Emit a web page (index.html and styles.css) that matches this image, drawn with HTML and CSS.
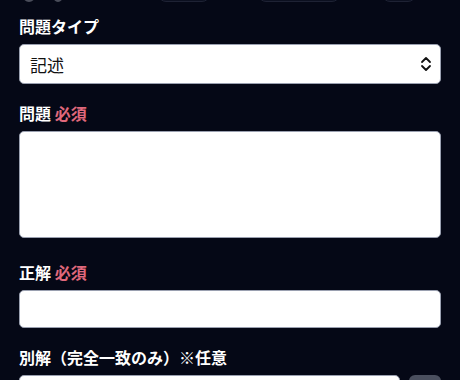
FILE: index.html
```html
<!DOCTYPE html>
<html lang="ja">

<head>
    <meta charset="UTF-8">
    <meta name="viewport" content="width=device-width, initial-scale=1.0">
    <title>問題を作成</title>
    <link rel="stylesheet" href="styles.css">
</head>

<body>
    <div class="toolbar">
        <span class="tool-icon"></span>
        <span class="tool-icon small"></span>
        <span class="tool-btn b1"></span>
        <span class="tool-btn b2"></span>
        <span class="tool-btn b3"></span>
    </div>

    <form class="quiz-form">
        <div class="field">
            <label for="type">問題タイプ</label>
            <div class="select-wrap">
                <select id="type" name="type">
                    <option>記述</option>
                    <option>選択</option>
                </select>
                <svg class="chevron" width="12" height="16" viewBox="0 0 12 16">
                    <path d="M2 6 L6 2 L10 6 M2 10 L6 14 L10 10" fill="none" stroke="#111" stroke-width="1.8"
                        stroke-linecap="round" stroke-linejoin="round" />
                </svg>
            </div>
        </div>

        <div class="field">
            <label for="question">問題 <span class="required">必須</span></label>
            <textarea id="question" name="question"></textarea>
        </div>

        <div class="field">
            <label for="answer">正解 <span class="required">必須</span></label>
            <input type="text" id="answer" name="answer">
        </div>

        <div class="field">
            <label for="alt">別解（完全一致のみ）※任意</label>
            <div class="alt-row">
                <input type="text" id="alt" name="alt">
                <button type="button" class="add-btn"></button>
            </div>
        </div>
    </form>
</body>

</html>
```

FILE: styles.css
```css
* {
    padding: 0;
    margin: 0;
    box-sizing: border-box;
}

body {
    background-color: #050816;
    color: #fff;
    font-family: "Noto Sans CJK JP", "Noto Sans", sans-serif;
    width: 460px;
    height: 380px;
    overflow: hidden;
}

.toolbar {
    display: flex;
    align-items: flex-end;
    height: 20px;
    margin-top: -18px;
    padding: 0 19px;
}

.tool-icon {
    width: 12px;
    height: 12px;
    border-radius: 50%;
    border: 2px solid #4a4d5a;
    margin-left: 4px;
    margin-right: 14px;
}

.tool-icon.small {
    width: 10px;
    margin-right: 0;
}

.tool-btn {
    height: 20px;
    border-radius: 8px;
    background-color: #0c1020;
    border: 1px solid #1e2234;
}

.b1 {
    width: 52px;
    margin-left: 95px;
}

.b2 {
    width: 82px;
    margin-left: 48px;
}

.b3 {
    width: 34px;
    margin-left: 42px;
}

.quiz-form {
    padding: 12px 19px 0 19px;
}

.field {
    margin-bottom: 17px;
}

label {
    display: block;
    font-size: 16px;
    font-weight: bold;
    line-height: 24px;
    margin-bottom: 6px;
}

.required {
    color: #e0687c;
}

.select-wrap {
    position: relative;
}

select,
input,
textarea {
    display: block;
    width: 100%;
    background-color: #fff;
    border: 1px solid #9aa0b0;
    border-radius: 5px;
    font-family: inherit;
    font-size: 17px;
    color: #111;
    outline: none;
}

select {
    appearance: none;
    height: 40px;
    padding: 0 10px;
}

.chevron {
    position: absolute;
    right: 9px;
    top: 12px;
}

textarea {
    height: 107px;
    resize: none;
    margin-bottom: 22px;
}

input {
    height: 38px;
    padding: 0 10px;
}

.alt-row {
    display: flex;
    gap: 9px;
}

.add-btn {
    width: 32px;
    height: 38px;
    flex-shrink: 0;
    border: none;
    border-radius: 6px;
    background-color: #4a4f5e;
}
```
